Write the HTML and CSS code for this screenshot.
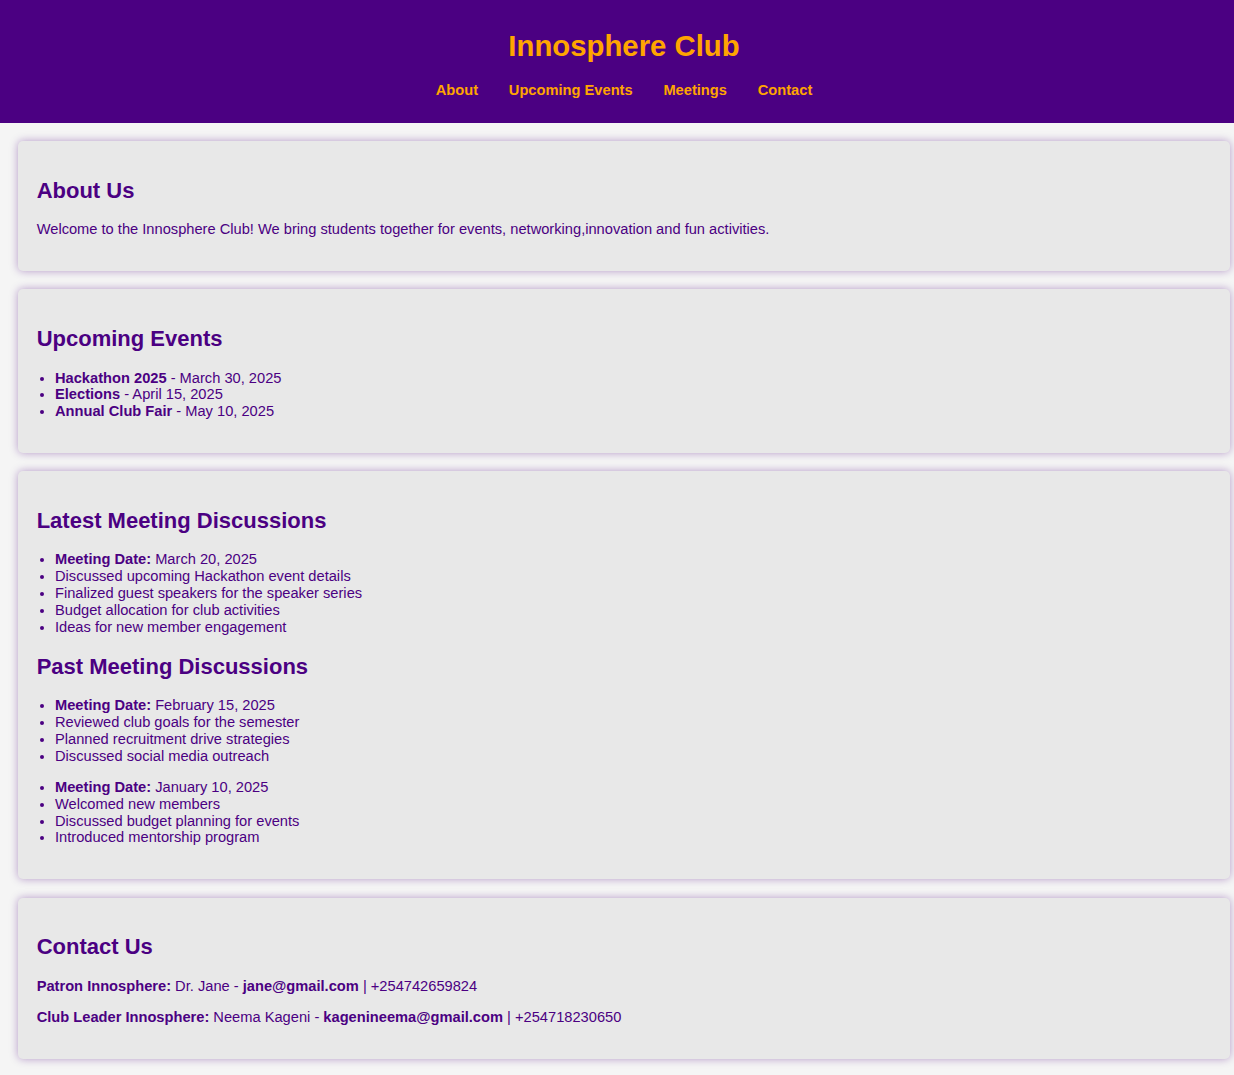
FILE: index.html
```html
<!DOCTYPE html>
<html lang="en">
<head>
<meta charset="UTF-8">
<title>Innosphere Club</title>
<link rel="stylesheet" href="styles.css">
</head>
<body>
<header class="site-header">
  <h1 class="site-title">Innosphere Club</h1>
  <nav>
    <ul class="nav-list">
      <li><a href="#about">About</a></li>
      <li><a href="#events">Upcoming Events</a></li>
      <li><a href="#meetings">Meetings</a></li>
      <li><a href="#contact">Contact</a></li>
    </ul>
  </nav>
</header>

<section class="card" id="about">
  <h2>About Us</h2>
  <p>Welcome to the Innosphere Club! We bring students together for events, networking,innovation and fun activities.</p>
</section>

<section class="card" id="events">
  <h2>Upcoming Events</h2>
  <ul class="list">
    <li><strong>Hackathon 2025</strong> - March 30, 2025</li>
    <li><strong>Elections</strong> - April 15, 2025</li>
    <li><strong>Annual Club Fair</strong> - May 10, 2025</li>
  </ul>
</section>

<section class="card" id="meetings">
  <h2>Latest Meeting Discussions</h2>
  <ul class="list">
    <li><strong>Meeting Date:</strong> March 20, 2025</li>
    <li>Discussed upcoming Hackathon event details</li>
    <li>Finalized guest speakers for the speaker series</li>
    <li>Budget allocation for club activities</li>
    <li>Ideas for new member engagement</li>
  </ul>
  <h2>Past Meeting Discussions</h2>
  <ul class="list">
    <li><strong>Meeting Date:</strong> February 15, 2025</li>
    <li>Reviewed club goals for the semester</li>
    <li>Planned recruitment drive strategies</li>
    <li>Discussed social media outreach</li>
  </ul>
  <ul class="list">
    <li><strong>Meeting Date:</strong> January 10, 2025</li>
    <li>Welcomed new members</li>
    <li>Discussed budget planning for events</li>
    <li>Introduced mentorship program</li>
  </ul>
</section>

<section class="card" id="contact">
  <h2>Contact Us</h2>
  <p><strong>Patron Innosphere:</strong> Dr. Jane - <strong>jane@gmail.com</strong> | +254742659824</p>
  <p><strong>Club Leader Innosphere:</strong> Neema Kageni - <strong>kagenineema@gmail.com</strong> | +254718230650</p>
</section>
</body>
</html>
```
FILE: styles.css
```css
html {
  margin: 0;
  padding: 0;
  overflow-x: hidden;
  background: #f5f5f5;
}

body {
  margin: 0;
  padding: 0 0 18.33px;
  width: 1248px;
  font-family: "Liberation Sans", Arial, sans-serif;
  font-size: 14.67px;
  line-height: 16.8px;
  background: #f5f5f5;
  color: #4b0082;
}

.site-header {
  background: #4b0082;
  color: #ffa500;
  text-align: center;
  padding: 9.17px 0;
}

.site-title {
  font-size: 29.33px;
  line-height: 33.7px;
  margin: 19.65px 0;
}

.nav-list {
  list-style: none;
  padding: 0;
  margin: 14.67px 0;
  display: flex;
  justify-content: center;
  line-height: 16.9px;
}

.nav-list li {
  margin: 0 15.4px;
}

.nav-list a {
  color: #ffa500;
  text-decoration: none;
  font-weight: bold;
}

.card {
  background: #e8e8e8;
  margin: 18.33px;
  padding: 18.33px;
  border-radius: 5px;
  box-shadow: 0 0 8px rgba(75, 0, 130, 0.38);
}

.card h2 {
  font-size: 22px;
  line-height: 25.3px;
  margin: 18.26px 0;
  color: #4b0082;
}

.card p {
  margin: 14.67px 0;
}

.list {
  padding-left: 18.33px;
  margin: 14.67px 0;
}
```
